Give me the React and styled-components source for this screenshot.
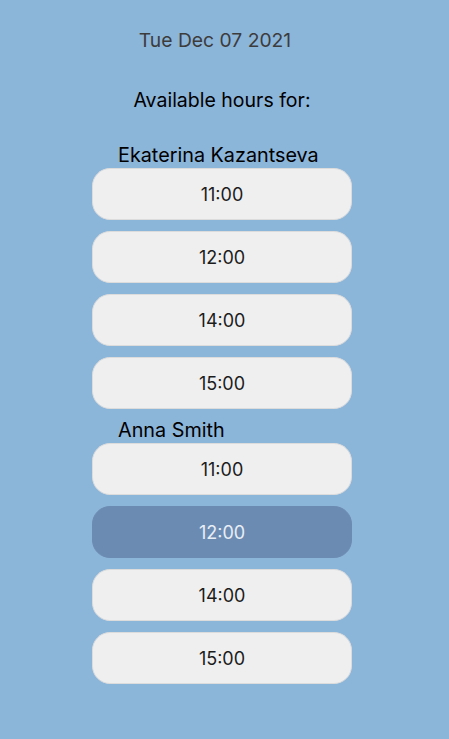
import styled, { createGlobalStyle } from "styled-components";

const GlobalStyle = createGlobalStyle`
  body {
    margin: 0;
    background: #8cb5da;
    font-family: Inter, "Noto Sans", sans-serif;
  }
`;

const Page = styled.div`
  min-height: 739px;
  display: flex;
  flex-direction: column;
  align-items: center;
  padding: 27px 5px 0 0;
  box-sizing: border-box;
`;

const DateTitle = styled.div`
  font-size: 19.3px;
  color: #3c3c3c;
  line-height: 26px;
  margin-right: 14px;
`;

const Heading = styled.div`
  font-size: 19.5px;
  color: #000;
  line-height: 24px;
  margin-top: 35px;
`;

const Group = styled.div`
  width: 260px;
  display: flex;
  flex-direction: column;
  gap: 11px;
  margin-top: ${(p) => p.$top}px;
`;

const Name = styled.div`
  font-size: 19.8px;
  color: #000;
  line-height: 22px;
  padding-left: 26px;
  margin-bottom: -9px;
`;

const Slot = styled.button`
  width: 260px;
  height: 52px;
  border: 1px solid ${(p) => (p.$selected ? "#6c8bb2" : "#dcdcdc")};
  border-radius: 18px;
  background: ${(p) => (p.$selected ? "#6c8bb2" : "#efefef")};
  color: ${(p) => (p.$selected ? "#e8eef6" : "#1c1c1c")};
  font-family: inherit;
  font-size: 18px;
  cursor: pointer;
  padding: 0;
`;

const hours = ["11:00", "12:00", "14:00", "15:00"];

const staff = [
  { name: "Ekaterina Kazantseva", selected: null, top: 32 },
  { name: "Anna Smith", selected: "12:00", top: 10 },
];

export default function App() {
  return (
    <>
      <GlobalStyle />
      <Page>
        <DateTitle>Tue Dec 07 2021</DateTitle>
        <Heading>Available hours for:</Heading>
        {staff.map((s) => (
          <Group key={s.name} $top={s.top}>
            <Name>{s.name}</Name>
            {hours.map((h) => (
              <Slot key={h} $selected={s.selected === h}>
                {h}
              </Slot>
            ))}
          </Group>
        ))}
      </Page>
    </>
  );
}
